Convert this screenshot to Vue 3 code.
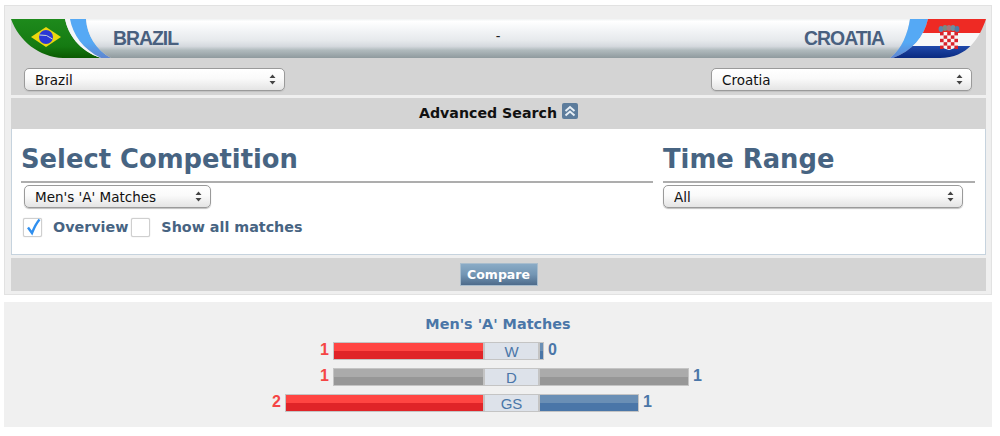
<template>
  <div class="page">
    <section class="search-panel">
      <div class="teams-box">
        <div class="banner">
          <svg class="banner-end" width="100" height="39" viewBox="0 0 100 39">
            <defs>
              <linearGradient id="bandL" x1="0" y1="0" x2="0" y2="1">
                <stop offset="0" stop-color="#f0f2f3" />
                <stop offset="0.06" stop-color="#ffffff" />
                <stop offset="0.3" stop-color="#f2f4f6" />
                <stop offset="0.55" stop-color="#e6e9ec" />
                <stop offset="0.7" stop-color="#d5d9de" />
                <stop offset="0.8" stop-color="#b0babd" />
                <stop offset="1" stop-color="#8f9a9e" />
              </linearGradient>
              <linearGradient id="green" x1="0" y1="0" x2="0" y2="1">
                <stop offset="0" stop-color="#1e8a1c" />
                <stop offset="0.7" stop-color="#157a12" />
                <stop offset="1" stop-color="#0a5a00" />
              </linearGradient>
              <linearGradient id="swooshL" x1="0" y1="0" x2="0" y2="1">
                <stop offset="0" stop-color="#55a9f5" />
                <stop offset="0.6" stop-color="#55a9f5" />
                <stop offset="1" stop-color="#5f85cf" />
              </linearGradient>
            </defs>
            <path d="M0 0 H54 C57 15 68 32 90 39 H52 C28 38 8 22 0 0Z" fill="url(#green)" />
            <path d="M54 0 H60 C62 16 72 30 90 38 L90 39 C68 32 57 15 54 0Z" fill="#f4f6f8" />
            <path d="M59 0 H75 C76 16 85 31 100 39 H90 C72 30 62 16 59 0Z" fill="url(#swooshL)" />
            <path d="M75 0 H100 V39 C85 31 76 16 75 0Z" fill="url(#bandL)" />
            <path d="M20 18 L35 8 L50 18 L35 28Z" fill="#ecd70e" />
            <circle cx="35" cy="18" r="7" fill="#2a37d6" />
            <path d="M28.5 16 Q36 15 41.5 20" fill="none" stroke="#c9d6d8" stroke-width="1" />
          </svg>
          <div class="band">
            <span class="team-name">BRAZIL</span>
            <span class="dash">-</span>
            <span class="team-name">CROATIA</span>
          </div>
          <svg class="banner-end" width="96" height="39" viewBox="0 0 96 39">
            <defs>
              <linearGradient id="bandR" x1="0" y1="0" x2="0" y2="1">
                <stop offset="0" stop-color="#f0f2f3" />
                <stop offset="0.06" stop-color="#ffffff" />
                <stop offset="0.3" stop-color="#f2f4f6" />
                <stop offset="0.55" stop-color="#e6e9ec" />
                <stop offset="0.7" stop-color="#d5d9de" />
                <stop offset="0.8" stop-color="#b0babd" />
                <stop offset="1" stop-color="#8f9a9e" />
              </linearGradient>
              <linearGradient id="swooshR" x1="0" y1="0" x2="0" y2="1">
                <stop offset="0" stop-color="#55a9f5" />
                <stop offset="0.6" stop-color="#55a9f5" />
                <stop offset="1" stop-color="#5f85cf" />
              </linearGradient>
              <linearGradient id="flagBlue" x1="0" y1="0" x2="0" y2="1">
                <stop offset="0" stop-color="#2049ab" />
                <stop offset="1" stop-color="#0a2a80" />
              </linearGradient>
              <clipPath id="flagClip">
                <path d="M38 0 H96 C90 18 78 39 50 39 H3 C22 32 34 18 38 0Z" />
              </clipPath>
            </defs>
            <path d="M0 0 H20 C18 14 12 30 0 39Z" fill="url(#bandR)" />
            <path d="M20 0 H38 C34 18 22 32 3 39 H0 C12 30 18 14 20 0Z" fill="url(#swooshR)" />
            <g clip-path="url(#flagClip)">
              <rect x="0" y="0" width="96" height="14" fill="#ee2a24" />
              <rect x="0" y="14" width="96" height="13" fill="#f8f8f8" />
              <rect x="0" y="27" width="96" height="12" fill="url(#flagBlue)" />
            </g>
            <g>
              <ellipse cx="51" cy="10" rx="2.4" ry="3" fill="#5d86ad" />
              <ellipse cx="55" cy="9" rx="2.4" ry="3" fill="#7a8a80" />
              <ellipse cx="59" cy="9" rx="2.4" ry="3" fill="#a8737a" />
              <ellipse cx="63" cy="9" rx="2.4" ry="3" fill="#6d8f9e" />
              <ellipse cx="67" cy="10" rx="2.4" ry="3" fill="#4f7ba6" />
            </g>
            <path d="M50 13 H68 V25 C68 28 63 30 59 31 C55 30 50 28 50 25Z" fill="#f6f6f6" />
            <g fill="#d9232c">
              <rect v-for="sq in shieldSquares" :key="sq.x + '-' + sq.y" :x="sq.x" :y="sq.y" width="3.6" height="3.4" />
            </g>
          </svg>
        </div>
        <div class="team-selects">
          <div class="select-wrap team-select">
            <select class="select">
              <option>Brazil</option>
            </select>
            <svg class="arrows" width="7" height="11" viewBox="0 0 7 11"><path d="M3.5 0.5 L6.5 4 H0.5Z M0.5 7 H6.5 L3.5 10.5Z" fill="#444" /></svg>
          </div>
          <div class="select-wrap team-select">
            <select class="select">
              <option>Croatia</option>
            </select>
            <svg class="arrows" width="7" height="11" viewBox="0 0 7 11"><path d="M3.5 0.5 L6.5 4 H0.5Z M0.5 7 H6.5 L3.5 10.5Z" fill="#444" /></svg>
          </div>
        </div>
      </div>

      <div class="advanced-bar">
        <span>Advanced Search</span>
        <svg class="collapse-icon" width="16" height="16" viewBox="0 0 16 16">
          <rect width="16" height="16" rx="2" fill="#5c7c9c" />
          <path d="M3.5 8 L8 4 L12.5 8 M3.5 12.5 L8 8.5 L12.5 12.5" fill="none" stroke="#e6eef5" stroke-width="2" />
        </svg>
      </div>

      <div class="filters">
        <div class="filter-col competition">
          <h2>Select Competition</h2>
          <div class="select-wrap comp-select">
            <select class="select">
              <option>Men's 'A' Matches</option>
            </select>
            <svg class="arrows" width="7" height="11" viewBox="0 0 7 11"><path d="M3.5 0.5 L6.5 4 H0.5Z M0.5 7 H6.5 L3.5 10.5Z" fill="#444" /></svg>
          </div>
          <div class="checks">
            <span class="checkbox">
              <svg width="18" height="18" viewBox="0 0 18 18"><path d="M4 9.5 L8 15 C10 10 12.5 5 15.5 1.5" fill="none" stroke="#2f8fef" stroke-width="2.4" /></svg>
            </span>
            <label class="check-label overview">Overview</label>
            <span class="checkbox"></span>
            <label class="check-label">Show all matches</label>
          </div>
        </div>
        <div class="filter-col range">
          <h2>Time Range</h2>
          <div class="select-wrap range-select">
            <select class="select">
              <option>All</option>
            </select>
            <svg class="arrows" width="7" height="11" viewBox="0 0 7 11"><path d="M3.5 0.5 L6.5 4 H0.5Z M0.5 7 H6.5 L3.5 10.5Z" fill="#444" /></svg>
          </div>
        </div>
      </div>

      <div class="compare-bar">
        <button class="compare-btn">Compare</button>
      </div>
    </section>

    <section class="result-panel">
      <h3>Men's 'A' Matches</h3>
      <div class="stats">
        <div v-for="row in stats" :key="row.label" class="stat-row">
          <div class="side left">
            <span class="count home">{{ row.home }}</span>
            <div class="bar" :class="row.draw ? 'grey' : 'red'" :style="{ width: row.homeWidth + 'px' }"></div>
          </div>
          <div class="stat-label">{{ row.label }}</div>
          <div class="side right">
            <div class="bar" :class="row.draw ? 'grey' : 'blue'" :style="{ width: row.awayWidth + 'px' }"></div>
            <span class="count away">{{ row.away }}</span>
          </div>
        </div>
      </div>
    </section>
  </div>
</template>

<script setup>
const stats = [
  { label: 'W', home: 1, away: 0, homeWidth: 150, awayWidth: 4, draw: false },
  { label: 'D', home: 1, away: 1, homeWidth: 150, awayWidth: 149, draw: true },
  { label: 'GS', home: 2, away: 1, homeWidth: 198, awayWidth: 99, draw: false }
];

// red squares of the Croatian shield
const shieldSquares = [];
for (let row = 0; row < 5; row++) {
  for (let col = 0; col < 5; col++) {
    if ((row + col) % 2 === 0) {
      shieldSquares.push({ x: 50 + col * 3.6, y: 13 + row * 3.4 });
    }
  }
}
</script>

<style scoped>
.page {
  width: 988px;
  margin-left: 4px;
  padding-top: 5px;
  font-family: "DejaVu Sans", Verdana, sans-serif;
}

.search-panel {
  box-sizing: border-box;
  height: 290px;
  padding: 13px 5px 3px 6px;
  background-color: #efefef;
  border: 1px solid #e2e2e2;
}

.teams-box {
  height: 76px;
  background-color: #d4d4d4;
}

.banner {
  display: flex;
  height: 39px;
}

.banner-end {
  flex: none;
  display: block;
}

.band {
  flex: 1;
  display: flex;
  justify-content: space-between;
  align-items: center;
  height: 39px;
  padding: 0 6px 0 2px;
  background: linear-gradient(#f0f2f3, #ffffff 6%, #f2f4f6 30%, #e6e9ec 55%, #d5d9de 70%, #b0babd 80%, #8f9a9e);
}

.team-name {
  font-family: "Liberation Sans", Arial, sans-serif;
  font-size: 19.4px;
  font-weight: bold;
  letter-spacing: -1px;
  color: #49607f;
}

.dash {
  margin-bottom: 5px;
  margin-left: 14px;
  font-family: "Liberation Sans", Arial, sans-serif;
  font-size: 14px;
  color: #222;
}

.team-selects {
  display: flex;
  justify-content: space-between;
  padding: 10px 14px 0 13px;
}

.select-wrap {
  position: relative;
  height: 23px;
}

.team-select {
  width: 261px;
}

.comp-select {
  width: 187px;
  margin-left: 3px;
  margin-top: 2px;
}

.range-select {
  width: 300px;
  margin-top: 2px;
}

.select {
  appearance: none;
  box-sizing: border-box;
  display: block;
  width: 100%;
  height: 100%;
  padding: 0 20px 0 10px;
  font-family: "DejaVu Sans", Verdana, sans-serif;
  font-size: 13.5px;
  color: #111;
  background: linear-gradient(#ffffff, #fafafa 45%, #e4e4e4);
  border: 1px solid #9a9a9a;
  border-radius: 5px;
  box-shadow: 0 1px 1px #c0c0c0;
}

.arrows {
  position: absolute;
  top: 6px;
  right: 9px;
  pointer-events: none;
}

.advanced-bar {
  display: flex;
  justify-content: center;
  align-items: center;
  gap: 5px;
  height: 31px;
  margin-top: 3px;
  padding-bottom: 2px;
  box-sizing: border-box;
  font-size: 14.2px;
  font-weight: bold;
  color: #111;
  background-color: #d4d4d4;
}

.collapse-icon {
  margin-top: -3px;
}

.filters {
  box-sizing: border-box;
  display: flex;
  gap: 10px;
  height: 126px;
  padding: 0 10px 0 9px;
  background-color: #fff;
  border: 1px solid #c6d3de;
  border-top: none;
}

.filter-col h2 {
  height: 54px;
  margin: 0;
  padding-top: 13px;
  box-sizing: border-box;
  font-size: 25.8px;
  line-height: 34px;
  font-weight: bold;
  color: #476482;
  border-bottom: 2px solid #adadad;
}

.competition {
  width: 632px;
}

.range {
  width: 312px;
}

.checks {
  display: flex;
  align-items: center;
  margin: 10px 0 0 2px;
}

.checkbox {
  box-sizing: border-box;
  display: block;
  flex: none;
  position: relative;
  width: 19px;
  height: 19px;
  background-color: #fff;
  border: 1px solid #cfcfcf;
  border-radius: 2px;
  box-shadow: 0 0 1px #bbb;
}

.checkbox svg {
  position: absolute;
  top: -1px;
  left: 0;
}

.check-label {
  margin-left: 11px;
  margin-bottom: 2px;
  font-size: 14.3px;
  font-weight: bold;
  color: #476482;
}

.check-label.overview {
  margin-right: 3px;
}

.compare-bar {
  display: flex;
  justify-content: center;
  align-items: center;
  height: 33px;
  margin-top: 3px;
  background-color: #d4d4d4;
}

.compare-btn {
  width: 78px;
  height: 23px;
  padding: 0;
  font-family: "DejaVu Sans", Verdana, sans-serif;
  font-size: 12.5px;
  font-weight: bold;
  color: #fff;
  background: linear-gradient(#8aabc6, #7396b4 50%, #4e6b8b);
  border: 1px solid #a9bdcd;
}

.result-panel {
  height: 125px;
  margin-top: 7px;
  padding-top: 14px;
  box-sizing: border-box;
  background-color: #f0f0f0;
}

.result-panel h3 {
  margin: 0;
  text-align: center;
  font-size: 14.4px;
  line-height: 17px;
  font-weight: bold;
  color: #4a76a8;
}

.stats {
  display: flex;
  flex-direction: column;
  gap: 8px;
  margin-top: 9px;
  padding-left: 27px;
}

.stat-row {
  display: grid;
  grid-template-columns: 1fr 57px 1fr;
  height: 18px;
}

.side {
  display: flex;
  align-items: flex-start;
  gap: 4px;
}

.side.left {
  justify-content: flex-end;
}

.bar {
  box-sizing: border-box;
  height: 18px;
  border: 1px solid #c4c4c4;
}

.left .bar {
  border-right: none;
}

.right .bar {
  border-left: none;
}

.bar.red {
  background: linear-gradient(#ff4542 50%, #e02428 50%);
}

.bar.blue {
  background: linear-gradient(#6a8fb5 50%, #4a76a8 50%);
}

.bar.grey {
  background: linear-gradient(#ababab 50%, #979797 50%);
}

.stat-label {
  box-sizing: border-box;
  height: 18px;
  font-family: "Liberation Sans", Arial, sans-serif;
  font-size: 15px;
  line-height: 17px;
  text-align: center;
  color: #4a76a8;
  background-color: #dde2ea;
  border: solid #c4c4c4;
  border-width: 1px 2px;
}

.count {
  font-family: "Liberation Sans", Arial, sans-serif;
  font-size: 16px;
  line-height: 16px;
  font-weight: bold;
}

.count.home {
  color: #f54545;
}

.count.away {
  color: #4a76a8;
}
</style>

<style>
body {
  background-color: #fff;
}
</style>
